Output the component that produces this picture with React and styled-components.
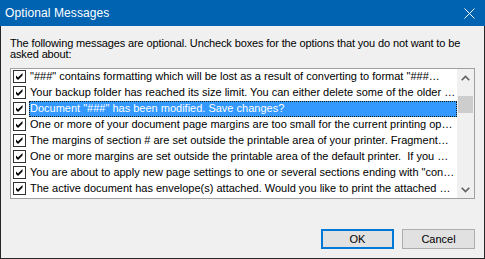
import React from 'react';
import styled, { createGlobalStyle } from 'styled-components';

const GlobalStyle = createGlobalStyle`
  html, body {
    margin: 0;
    padding: 0;
    background: #f0f0f0;
  }
  * {
    box-sizing: border-box;
  }
`;

const messages = [
  { text: '"###" contains formatting which will be lost as a result of converting to format "###…' },
  { text: 'Your backup folder has reached its size limit. You can either delete some of the older …' },
  { text: 'Document "###" has been modified. Save changes?', selected: true },
  { text: 'One or more of your document page margins are too small for the current printing op…' },
  { text: 'The margins of section # are set outside the printable area of your printer. Fragment…' },
  { text: 'One or more margins are set outside the printable area of the default printer.  If you …' },
  { text: 'You are about to apply new page settings to one or several sections ending with "con…' },
  { text: 'The active document has envelope(s) attached. Would you like to print the attached …' },
];

const Window = styled.div`
  width: 485px;
  height: 259px;
  display: flex;
  flex-direction: column;
  background: #f0f0f0;
  font-family: 'Liberation Sans', Arial, sans-serif;
`;

const TitleBar = styled.div`
  height: 26px;
  flex: none;
  display: flex;
  align-items: center;
  justify-content: space-between;
  padding: 0 10px 0 5px;
  background: #0063b1;
  color: #ffffff;
  font-size: 12px;
`;

const Title = styled.span`
  line-height: 26px;
  letter-spacing: 0.1px;
`;

const CloseIcon = styled.svg`
  width: 11px;
  height: 11px;
  display: block;
`;

const Body = styled.div`
  flex: 1;
  display: flex;
  flex-direction: column;
  padding: 12px 9px 0 9px;
  border: 1px solid #262626;
  border-top: none;
`;

const Description = styled.p`
  margin: 0;
  font-size: 11px;
  line-height: 11px;
  letter-spacing: -0.13px;
  color: #000000;
`;

const ListBox = styled.div`
  margin-top: 8px;
  height: 131px;
  display: flex;
  border: 1px solid #a0a0a0;
  background: #ffffff;
`;

const Rows = styled.div`
  flex: 1;
  min-width: 0;
  display: flex;
  flex-direction: column;
  padding-left: 2px;
`;

const Row = styled.div`
  height: 16px;
  display: flex;
  align-items: flex-start;
`;

const Box = styled.span`
  width: 13px;
  height: 13px;
  flex: none;
  margin-top: 1px;
  border: 1px solid #333333;
  background: #ffffff;
  display: flex;
  align-items: center;
  justify-content: center;
`;

const Label = styled.span`
  flex: 1;
  min-width: 0;
  height: 16px;
  margin-left: 3px;
  padding-left: 1px;
  font-size: 11px;
  line-height: 14px;
  white-space: pre;
  overflow: hidden;
  color: ${p => (p.$selected ? '#ffffff' : '#000000')};
  background: ${p => (p.$selected ? '#3399ff' : 'transparent')};
  outline: ${p => (p.$selected ? '1px dotted #1a1a1a' : 'none')};
  outline-offset: -1px;
`;

const ScrollBar = styled.div`
  width: 17px;
  flex: none;
  display: flex;
  flex-direction: column;
  background: #f0f0f0;
`;

const ArrowButton = styled.div`
  height: 17px;
  display: flex;
  align-items: center;
  justify-content: center;
`;

const Thumb = styled.div`
  height: 17px;
  margin: 10px 1px 0 1px;
  background: #cdcdcd;
`;

const Track = styled.div`
  flex: 1;
`;

const Footer = styled.div`
  margin-top: 30px;
  display: flex;
  justify-content: flex-end;
  gap: 8px;
`;

const Button = styled.button`
  width: 73px;
  height: 20px;
  padding: 0;
  background: #e1e1e1;
  border: ${p => (p.$primary ? '2px solid #0078d7' : '1px solid #adadad')};
  font-family: 'Liberation Sans', Arial, sans-serif;
  font-size: 11px;
  color: #000000;
`;

function Check() {
  return (
    <svg width="9" height="9" viewBox="0 0 9 9">
      <path d="M1 3.5 L3 5.5 L7.5 1 L7.5 3.5 L3 8 L1 6 Z" fill="#000" />
    </svg>
  );
}

function Chevron({ down }) {
  return (
    <svg width="9" height="6" viewBox="0 0 9 6">
      <path
        d={down ? 'M0.7 0.8 L4.5 4.6 L8.3 0.8' : 'M0.7 5.2 L4.5 1.4 L8.3 5.2'}
        fill="none"
        stroke="#606060"
        strokeWidth="1.6"
      />
    </svg>
  );
}

export default function App() {
  return (
    <Window>
      <GlobalStyle />
      <TitleBar>
        <Title>Optional Messages</Title>
        <CloseIcon viewBox="0 0 11 11">
          <path d="M0.5 0.5 L10.5 10.5 M10.5 0.5 L0.5 10.5" stroke="#fff" strokeWidth="1" />
        </CloseIcon>
      </TitleBar>
      <Body>
        <Description>
          The following messages are optional. Uncheck boxes for the options that you do not want to be asked about:
        </Description>
        <ListBox>
          <Rows>
            {messages.map((m, i) => (
              <Row key={i}>
                <Box>
                  <Check />
                </Box>
                <Label $selected={m.selected}>{m.text}</Label>
              </Row>
            ))}
          </Rows>
          <ScrollBar>
            <ArrowButton>
              <Chevron />
            </ArrowButton>
            <Thumb />
            <Track />
            <ArrowButton>
              <Chevron down />
            </ArrowButton>
          </ScrollBar>
        </ListBox>
        <Footer>
          <Button $primary>OK</Button>
          <Button>Cancel</Button>
        </Footer>
      </Body>
    </Window>
  );
}
